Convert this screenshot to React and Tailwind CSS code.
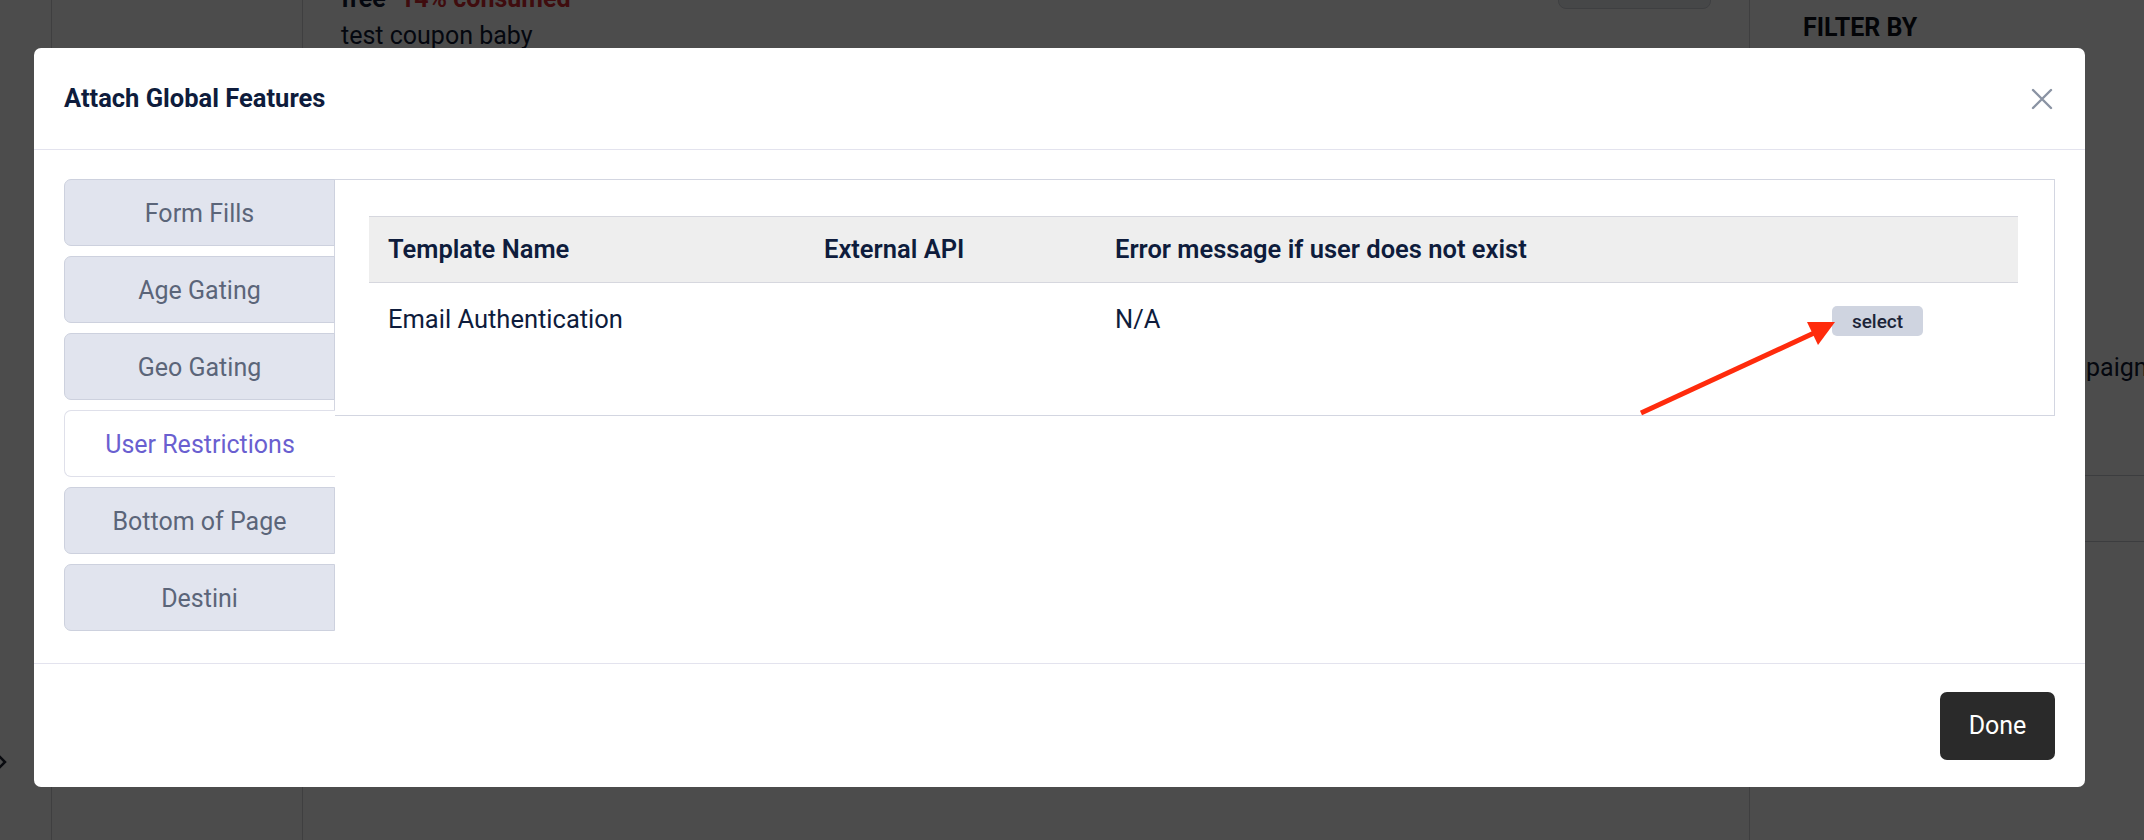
import React, { useState } from 'react';

const tabs = ['Form Fills', 'Age Gating', 'Geo Gating', 'User Restrictions', 'Bottom of Page', 'Destini'];

// Page that sits behind the modal overlay
const BackgroundPage = () => (
  <div className="flex h-full w-full">
    {/* left rail */}
    <div className="relative w-[52px] shrink-0 border-r border-[#d2d4d8]">
      <svg className="absolute left-[-8px] top-[752px]" width="16" height="20" viewBox="0 0 16 20" fill="none">
        <path d="M6 3l7 7-7 7" stroke="#1f2433" strokeWidth="2.5" />
      </svg>
    </div>
    <div className="w-[251px] shrink-0 border-r border-[#d2d4d8]" />
    {/* main list */}
    <div className="flex flex-1 justify-between pl-[38px] pr-[38px]">
      <div className="mt-[-20px] flex flex-col text-[25px] leading-[37px] text-[#101a33]">
        <div className="flex gap-[14px]">
          <span className="font-bold">free</span>
          <span className="font-bold text-[#d42a2f]">14% consumed</span>
        </div>
        <div>test coupon baby</div>
      </div>
      <div className="mt-[-40px] h-[49px] w-[153px] rounded-[8px] border border-[#cfd2d9] bg-[#eceef2]" />
    </div>
    {/* filter sidebar */}
    <div className="w-[395px] shrink-0 border-l border-[#d2d4d8]">
      <div className="pl-[53px] pt-[9px] text-[25px] font-bold leading-[37px] text-[#0b0f1a]">FILTER BY</div>
      <div className="mt-[303px] flex whitespace-nowrap text-[25px] leading-[37px] text-[#101a33]">
        <span className="w-[336px] shrink-0 overflow-hidden text-right">Cam</span>
        <span>paigns</span>
      </div>
      <div className="mt-[89px] h-[67px] border-t border-b border-[#c9ccd3]" />
    </div>
  </div>
);

const CloseIcon = () => (
  <svg width="22" height="22" viewBox="0 0 22 22" fill="none">
    <path d="M2 2l18 18M20 2L2 20" stroke="#8a93a3" strokeWidth="2.4" strokeLinecap="round" />
  </svg>
);

export default function App() {
  const [active, setActive] = useState('User Restrictions');

  return (
    <div className="relative h-[840px] w-[2144px] overflow-hidden bg-white font-['Roboto',sans-serif]">
      <BackgroundPage />

      {/* overlay */}
      <div className="absolute inset-0 bg-black/70" />

      {/* modal */}
      <div className="absolute left-[34px] top-[48px] flex h-[739px] w-[2051px] flex-col rounded-[7px] bg-white">
        <div className="flex h-[102px] shrink-0 items-center justify-between border-b border-[#e3e3ee] pl-[30px] pr-[32px]">
          <h2 className="text-[25.5px] font-bold text-[#0e1c3c]">Attach Global Features</h2>
          <button className="flex h-[22px] w-[22px] items-center justify-center">
            <CloseIcon />
          </button>
        </div>

        <div className="flex flex-1 items-start px-[30px] pt-[29px]">
          {/* tabs */}
          <div className="relative z-10 -mr-px flex w-[271px] shrink-0 flex-col gap-[10px]">
            {tabs.map((t) => {
              const isActive = t === active;
              return (
                <button
                  key={t}
                  onClick={() => setActive(t)}
                  className={
                    isActive
                      ? 'flex h-[67px] items-center justify-center rounded-l-[7px] border border-r-0 border-[#dfe0ea] bg-white pt-[2px] text-[25px] text-[#6a5fd0]'
                      : 'flex h-[67px] items-center justify-center rounded-l-[7px] border border-[#cdd1de] bg-[#e1e4ee] pt-[2px] text-[25px] text-[#5b6579]'
                  }
                >
                  {t}
                </button>
              );
            })}
          </div>

          {/* content panel */}
          <div className="h-[237px] flex-1 border border-[#d3d6e1] pl-[34px] pr-[36px] pt-[36px]">
            <div className="grid h-[67px] grid-cols-[436px_291px_717px_1fr] items-center border-y border-[#d6d7de] bg-[#eeeeee] text-[25.5px] font-semibold text-[#0e1c3c]">
              <div className="pl-[19px]">Template Name</div>
              <div className="pl-[19px]">External API</div>
              <div className="pl-[19px]">Error message if user does not exist</div>
              <div />
            </div>
            <div className="grid grid-cols-[436px_291px_717px_1fr] items-start pt-[18px] text-[25.5px] leading-[37px] text-[#0e1c3c]">
              <div className="pl-[19px]">Email Authentication</div>
              <div className="pl-[19px]" />
              <div className="pl-[19px]">N/A</div>
              <div className="pl-[19px]">
                <button className="mt-[5px] flex h-[30px] w-[91px] items-center justify-center rounded-[5px] bg-[#cfd4e0] text-[19px] font-medium leading-none text-[#1c2438]">
                  select
                </button>
              </div>
            </div>
          </div>
        </div>

        <div className="flex h-[124px] shrink-0 items-center justify-end border-t border-[#e3e3ee] px-[30px]">
          <button className="h-[68px] w-[115px] rounded-[7px] bg-[#2a2a2a] text-[25px] text-white">Done</button>
        </div>
      </div>

      {/* annotation arrow */}
      <svg className="pointer-events-none absolute inset-0" width="2144" height="840" viewBox="0 0 2144 840">
        <line x1="1641" y1="413" x2="1814" y2="333" stroke="#ff2b0c" strokeWidth="5" />
        <polygon points="1835,322 1807,322 1818,345" fill="#ff2b0c" />
      </svg>
    </div>
  );
}
